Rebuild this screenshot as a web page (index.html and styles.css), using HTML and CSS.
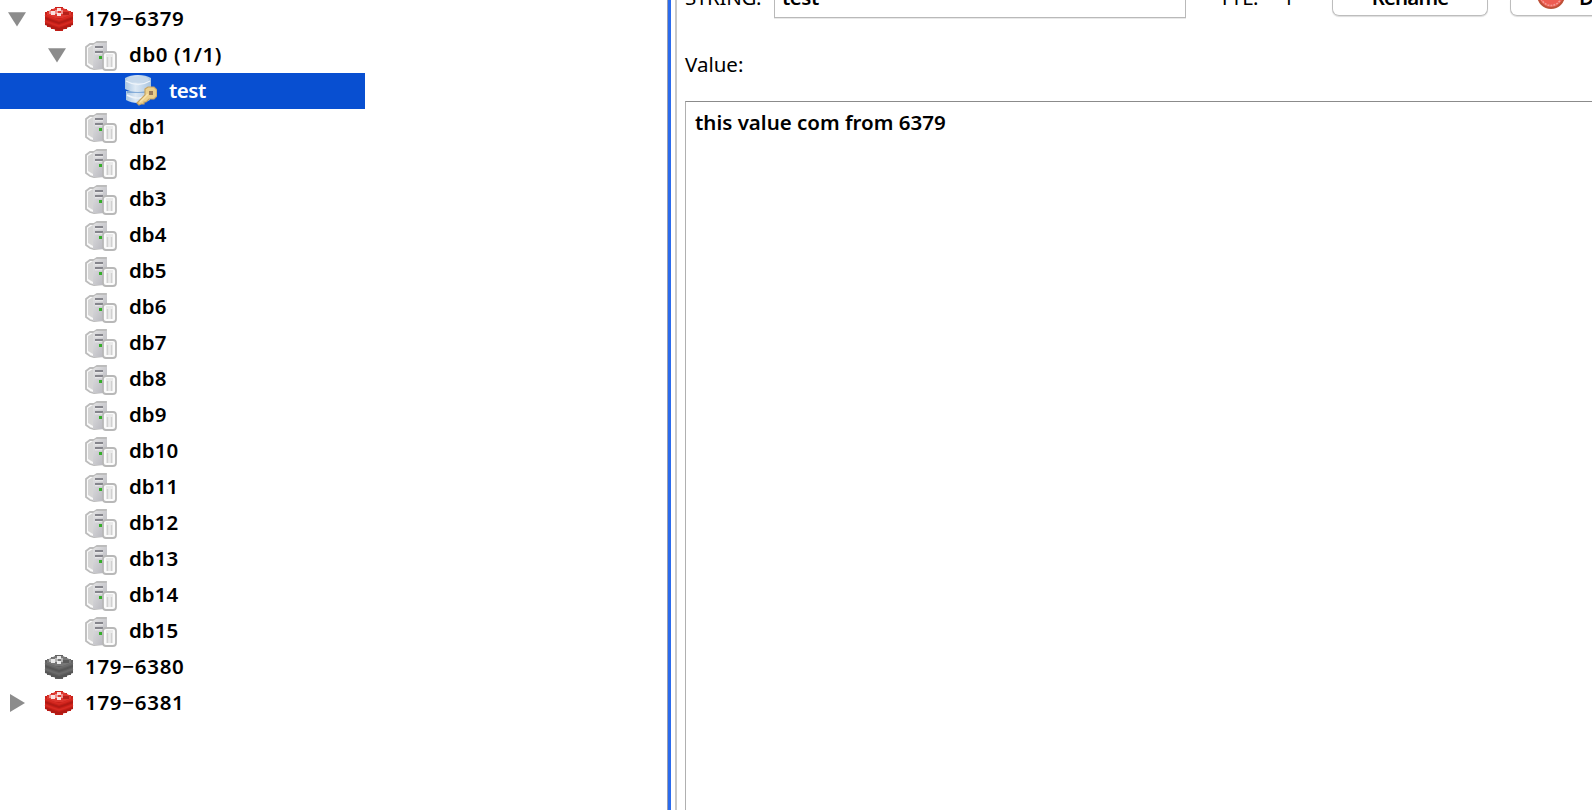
FILE: index.html
```
<!DOCTYPE html>
<html lang="en">
<head>
<meta charset="utf-8">
<title>Redis Desktop Manager</title>
<link rel="stylesheet" href="styles.css">
</head>
<body>
<svg class="defs" aria-hidden="true">
  <symbol id="redis" viewBox="0 0 32 32">
    <path d="M2 9h2V8h4V6h4V4h8v2h4v2h4v1h2v13h-2v2h-4v2h-4v2h-8v-2H8v-2H4v-2H2z" fill="var(--base)"/>
    <path d="M4 9 12 5h8l8 4v3l-8 3h-8l-8-3z" fill="var(--top)"/>
    <path d="M2 14l8 3 6 2 6-2 8-3v2l-8 3-6 2-6-2-8-3zM2 20l8 3 6 2 6-2 8-3v2l-8 4-6 2-6-2-8-4z" fill="var(--dark)" opacity=".65"/>
    <path d="M2 12l8 3 6 2 6-2 8-3M2 18l8 3 6 2 6-2 8-3" fill="none" stroke="var(--mid)" stroke-width="1.5"/>
    <path d="M8 8h4v4H8zM14 5h4v3h-4zM14 10h4v3h-4z" fill="#fff" opacity=".85"/>
    <path d="M12 7h3v4h-3zM18 7h2v4h-2zM6 8h2v3H6z" fill="#fff" opacity=".45"/>
    <path d="M20 9h6v3h-6z" fill="var(--dark)" opacity=".7"/>
  </symbol>
  <symbol id="server" viewBox="0 0 32 32">
    <linearGradient id="steel" x2="1" y2="1"><stop stop-color="#e2e2e3"/><stop offset="1" stop-color="#b3b3ba"/></linearGradient>
    <path d="M1 6 5 3h4l3-2h9v26l-12 1-4-1-4-3z" fill="#fafafa" stroke="#bcbcbc" stroke-width="1.8"/>
    <path d="M3 7l5-3v21l-5-3z" fill="#d5d5d5"/>
    <path d="M8 4l3-2h11v26H8z" fill="url(#steel)"/>
    <path d="M10 6h8M10 11h8" stroke="#85858c" stroke-width="1.8"/>
    <path d="M10 7.8h8M10 12.8h8" stroke="#efeff0"/>
    <path d="M14 15h3v3h-3z" fill="#35ae2a"/>
    <path d="M18 14q0-3 3-3h7q3 0 3 3v12q0 3-3 3h-7q-3 0-3-3z" fill="#fbfbfb" stroke="#b8b8b8" stroke-width="1.8"/>
    <path d="M21 15h7v11h-7z" fill="#ebebeb"/>
    <path d="M22.5 16v10M26.5 16v10" stroke="#d0d0d0" stroke-width="1.4"/>
    <path d="M21 14h7" stroke="#d8d8d8"/>
  </symbol>
  <symbol id="key" viewBox="0 0 32 32">
    <linearGradient id="drum"><stop stop-color="#a9c6e2"/><stop offset=".4" stop-color="#dde9f4"/><stop offset="1" stop-color="#aac5e0"/></linearGradient>
    <path d="M1 16h24v9q-5 3-12 3T1 25z" fill="url(#drum)"/>
    <path d="M2 17h22" stroke="#719fd3" stroke-width="1.6"/>
    <path d="M0 3q5-3 13-3t13 3v11q-5 3-13 3T0 14z" fill="url(#drum)"/>
    <ellipse cx="13" cy="4.5" rx="11" ry="3.3" fill="#c6d8ea"/>
    <path d="M1 6q12 7 24 0M2 20q10 5 16 2" fill="none" stroke="#edf3f9" stroke-width="1.4"/>
    <path d="M20 14l3-2h6l3 3v6l-3 3h-5l-3 3h-2v2h-3l-2 1-2-2 8-8z" fill="#ecd08c" stroke="#c7a463" stroke-width="1.2"/>
    <path d="M24 16h4v4h-4z" fill="#9c7b58"/>
    <path d="M15 27l8-8" stroke="#f7e4ad" stroke-width="1.5"/>
  </symbol>
  <symbol id="down" viewBox="0 0 18 15"><path d="M0 .3h18L9 14.5z" fill="#8c8c8c"/></symbol>
  <symbol id="right" viewBox="0 0 15 18"><path d="M0 0v18l15-9z" fill="#8c8c8c"/></symbol>
</svg>
<div class="app">
  <nav class="tree">
    <div class="row root"><svg class="arrow"><use href="#down"/></svg><svg class="icon red"><use href="#redis"/></svg><span class="label host">179−6379</span></div>
    <div class="row db"><svg class="arrow"><use href="#down"/></svg><svg class="icon"><use href="#server"/></svg><span class="label first">db0 (1/1)</span></div>
    <div class="row leaf"><svg class="icon"><use href="#key"/></svg><span class="label">test</span></div>
    <div class="row db"><i class="arrow"></i><svg class="icon"><use href="#server"/></svg><span class="label">db1</span></div>
    <div class="row db"><i class="arrow"></i><svg class="icon"><use href="#server"/></svg><span class="label">db2</span></div>
    <div class="row db"><i class="arrow"></i><svg class="icon"><use href="#server"/></svg><span class="label">db3</span></div>
    <div class="row db"><i class="arrow"></i><svg class="icon"><use href="#server"/></svg><span class="label">db4</span></div>
    <div class="row db"><i class="arrow"></i><svg class="icon"><use href="#server"/></svg><span class="label">db5</span></div>
    <div class="row db"><i class="arrow"></i><svg class="icon"><use href="#server"/></svg><span class="label">db6</span></div>
    <div class="row db"><i class="arrow"></i><svg class="icon"><use href="#server"/></svg><span class="label">db7</span></div>
    <div class="row db"><i class="arrow"></i><svg class="icon"><use href="#server"/></svg><span class="label">db8</span></div>
    <div class="row db"><i class="arrow"></i><svg class="icon"><use href="#server"/></svg><span class="label">db9</span></div>
    <div class="row db"><i class="arrow"></i><svg class="icon"><use href="#server"/></svg><span class="label">db10</span></div>
    <div class="row db"><i class="arrow"></i><svg class="icon"><use href="#server"/></svg><span class="label">db11</span></div>
    <div class="row db"><i class="arrow"></i><svg class="icon"><use href="#server"/></svg><span class="label">db12</span></div>
    <div class="row db"><i class="arrow"></i><svg class="icon"><use href="#server"/></svg><span class="label">db13</span></div>
    <div class="row db"><i class="arrow"></i><svg class="icon"><use href="#server"/></svg><span class="label">db14</span></div>
    <div class="row db"><i class="arrow"></i><svg class="icon"><use href="#server"/></svg><span class="label">db15</span></div>
    <div class="row root"><i class="arrow"></i><svg class="icon gray"><use href="#redis"/></svg><span class="label host">179−6380</span></div>
    <div class="row root"><svg class="arrow side"><use href="#right"/></svg><svg class="icon red"><use href="#redis"/></svg><span class="label host">179−6381</span></div>
  </nav>
  <div class="splitter"></div>
  <main class="detail">
    <header class="toolbar">
      <span class="type">STRING:</span>
      <div class="name"><span>test</span></div>
      <span class="ttl">TTL:</span><span class="seconds">-1</span>
      <div class="button rename"><span>Rename</span></div>
      <div class="button delete"><svg class="stop" viewBox="0 0 28 28"><circle cx="14" cy="14" r="13" fill="#ee5b51" stroke="#bd5038" stroke-width="2"/><circle cx="14" cy="14" r="10.5" fill="none" stroke="#f49a93" stroke-width="1.6" stroke-dasharray="2 1"/></svg><span>Delete</span></div>
    </header>
    <div class="caption">Value:</div>
    <div class="editor"><span>this value com from 6379</span></div>
  </main>
</div>
</body>
</html>
```
FILE: styles.css
```
* { box-sizing: border-box; }
body { margin: 0; overflow: hidden; background: #fff; color: #000; font: 600 20.5px/34px "Noto Sans", "Open Sans", sans-serif; }
.defs { position: absolute; width: 0; height: 0; }
.app { display: flex; width: 1592px; height: 810px; }
.tree { width: 667px; padding-top: 1px; flex: none; }
.row { display: flex; height: 36px; align-items: flex-start; white-space: nowrap; }
.root { padding-left: 8px; }
.db { padding-left: 48px; }
.leaf { width: 365px; padding-left: 125px; background: #084fd1; color: #fff; }
.arrow { width: 18px; height: 15px; margin: 11px 19px 0 0; flex: none; }
.root .arrow { margin-right: 17px; }
.root .side { width: 15px; height: 18px; margin: 9px 18px 0 2px; }
.icon { width: 32px; height: 32px; margin-top: 4px; flex: none; }
.root .icon { margin-top: 2px; }
.leaf .icon { margin-top: 2px; }
.red { --base: #c92019; --top: #de362e; --mid: #d62a22; --dark: #a51713; }
.gray { --base: #626262; --top: #777; --mid: #6c6c6c; --dark: #505050; }
.label { margin-left: 12px; }
.root .label { margin-left: 10px; }
.first { letter-spacing: .6px; }
.leaf .label { letter-spacing: -.5px; }
.host { letter-spacing: .7px; }
.splitter { width: 10px; flex: none; border-right: 2px solid #c8c8c8; background: linear-gradient(90deg, #9c9fb0 0 1px, #2b6bed 1px 4px, #fff 4px); }
.detail { width: 915px; flex: none; padding-left: 8px; display: flex; flex-direction: column; overflow: hidden; }
.toolbar { display: flex; height: 20px; align-items: flex-start; white-space: nowrap; font-weight: 400; }
.toolbar span { display: block; margin-top: -20px; flex: none; }
.type { width: 89px; letter-spacing: -.3px; }
.name { width: 412px; height: 18px; flex: none; padding-left: 7px; border: 1px solid #b9b9b9; border-width: 0 1px 1px; box-shadow: 0 1px #e9e9e9; font-weight: 600; letter-spacing: -.5px; }
.ttl { width: 83px; padding-left: 33px; }
.seconds { width: 63px; padding-left: 7px; }
.button { height: 16px; flex: none; border: 1px solid #bdbdbd; border-top: 0; border-radius: 0 0 7px 7px; box-shadow: 0 1px 1px #ddd; font-weight: 600; }
.rename { width: 156px; text-align: center; letter-spacing: -.9px; }
.delete { width: 140px; margin-left: 22px; padding-left: 26px; display: flex; }
.stop { width: 28px; height: 28px; margin: -19px 14px 0 0; flex: none; }
.caption { height: 81px; padding: 27px 0 0 0; font-weight: 400; }
.editor { flex: 1; border-left: 1px solid #b0b0b0; border-top: 1px solid #8b8b8b; padding: 3px 9px; white-space: nowrap; }
```
